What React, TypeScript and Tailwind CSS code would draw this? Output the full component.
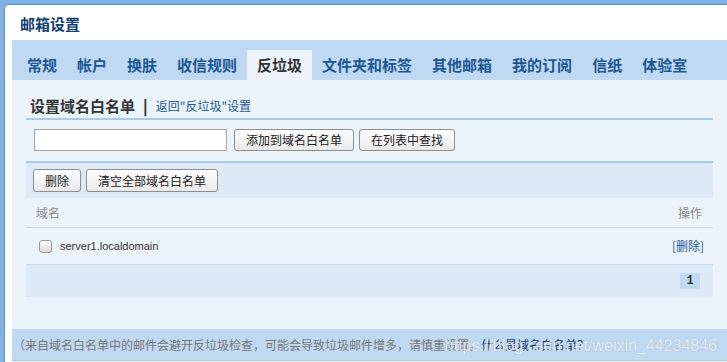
import React from "react";

const cjk = { fontFamily: '"Noto Sans CJK SC", "Liberation Sans", sans-serif' };

const tabs = ["常规", "帐户", "换肤", "收信规则", "反垃圾", "文件夹和标签", "其他邮箱", "我的订阅", "信纸", "体验室"];

function Btn({ children }: { children: React.ReactNode }) {
  return (
    <button className="h-full px-[11px] border border-[#8e8e8e] rounded-[3px] bg-gradient-to-b from-white to-[#e9e9e9] text-[12px] text-[#222] leading-none">
      {children}
    </button>
  );
}

export default function App() {
  return (
    <div className="w-[727px] h-[362px] overflow-hidden bg-[#80b1e6] pt-[4px] pl-[4px]" style={cjk}>
      <div className="relative h-[400px] bg-white border-t border-l border-[#5b8fd0] rounded-tl-[5px] pl-[7px]">
        <div className="h-[35px] flex items-center pl-[8px] pt-[3px] text-[15px] font-bold text-[#10406f]">邮箱设置</div>
        <div className="h-[40px] bg-[#bfd9f2] flex items-end pl-[5px]">
          {tabs.map((t) => (
            <div
              key={t}
              className={
                t === "反垃圾"
                  ? "h-[30px] px-[10px] flex items-center text-[15px] font-bold text-[#333] bg-[#ebf3fb]"
                  : "h-[30px] px-[10px] flex items-center text-[15px] font-bold text-[#1c5793]"
              }
            >
              {t}
            </div>
          ))}
        </div>
        <div className="bg-[#ebf3fb]">
          <div className="ml-[14px] mr-[14px]">
            <div className="h-[40px] pt-[14px] pl-[4px] flex items-center border-b-2 border-[#a9c9e8]">
              <span className="text-[15px] font-bold text-[#333]">设置域名白名单</span>
              <span className="mx-[8px] text-[15px] font-black text-[#333]">|</span>
              <a className="text-[12px] text-[#1f5a96]">返回"反垃圾"设置</a>
            </div>
            <div className="h-[43px] pt-[9px] pl-[8px] flex items-start border-b-2 border-[#a9c9e8]">
              <div className="flex gap-[5px] h-[22px]">
                <input className="w-[193px] h-[22px] bg-white border border-[#a5a5a5] mr-[2px]" />
                <Btn>添加到域名白名单</Btn>
                <Btn>在列表中查找</Btn>
              </div>
            </div>
            <div className="h-[35px] bg-[#dde9f5] pt-[6px] pl-[7px]">
              <div className="flex gap-[5px] h-[23px]">
                <Btn>删除</Btn>
                <Btn>清空全部域名白名单</Btn>
              </div>
            </div>
            <div className="h-[30px] flex items-center justify-between pl-[10px] pr-[11px] border-b border-[#c6d7e8] text-[12px] text-[#8a8a8a]">
              <span>域名</span>
              <span>操作</span>
            </div>
            <div className="h-[37px] flex items-center justify-between pl-[13px] pr-[9px] border-b border-[#c6d7e8]">
              <div className="flex items-center">
                <span className="w-[13px] h-[13px] rounded-[3px] border border-[#9a9a9a] bg-gradient-to-b from-white to-[#d8d8d8]" />
                <span className="ml-[8px] text-[11px] text-[#333]" style={{ fontFamily: '"Liberation Sans", sans-serif' }}>
                  server1.localdomain
                </span>
              </div>
              <a className="text-[12px] text-[#1f5a96]">[删除]</a>
            </div>
            <div className="h-[32px] bg-[#dde9f5] flex items-center justify-end pr-[13px]">
              <span
                className="w-[20px] h-[16px] bg-[#bfd9f2] flex items-center justify-center text-[12px] font-bold text-[#333]"
                style={{ fontFamily: '"Liberation Mono", monospace' }}
              >
                1
              </span>
            </div>
          </div>
          <div className="h-[32px]" />
          <div className="relative h-[32px] bg-[#bfd9f2] border-b border-[#a9c9e8] flex items-center pl-[1px] text-[12px] text-[#777]">
            <span>（来自域名白名单中的邮件会避开反垃圾检查，可能会导致垃圾邮件增多，请慎重设置。</span>
            <a className="text-[#1a3e6e]">什么是域名白名单？</a>
            <span
              className="absolute right-[10px] top-[5px] text-[16px] text-white/75"
              style={{ fontFamily: '"Liberation Sans", sans-serif', textShadow: "0 0 1px rgba(120,140,160,0.6)" }}
            >
              https://blog.csdn.net/weixin_44234846
            </span>
          </div>
          <div className="h-[40px]" />
        </div>
      </div>
    </div>
  );
}
